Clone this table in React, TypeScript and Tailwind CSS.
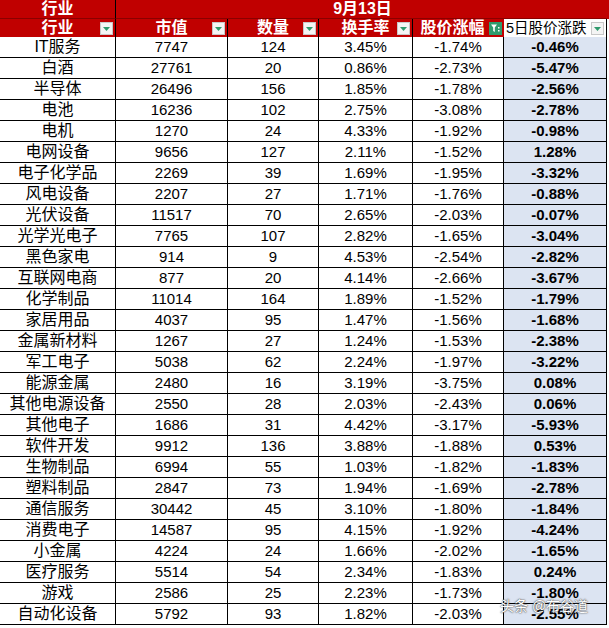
const rows: [string, string, string, string, string, string][] = [
  ['IT服务', '7747', '124', '3.45%', '-1.74%', '-0.46%'],
  ['白酒', '27761', '20', '0.86%', '-2.73%', '-5.47%'],
  ['半导体', '26496', '156', '1.85%', '-1.78%', '-2.56%'],
  ['电池', '16236', '102', '2.75%', '-3.08%', '-2.78%'],
  ['电机', '1270', '24', '4.33%', '-1.92%', '-0.98%'],
  ['电网设备', '9656', '127', '2.11%', '-1.52%', '1.28%'],
  ['电子化学品', '2269', '39', '1.69%', '-1.95%', '-3.32%'],
  ['风电设备', '2207', '27', '1.71%', '-1.76%', '-0.88%'],
  ['光伏设备', '11517', '70', '2.65%', '-2.03%', '-0.07%'],
  ['光学光电子', '7765', '107', '2.82%', '-1.65%', '-3.04%'],
  ['黑色家电', '914', '9', '4.53%', '-2.54%', '-2.82%'],
  ['互联网电商', '877', '20', '4.14%', '-2.66%', '-3.67%'],
  ['化学制品', '11014', '164', '1.89%', '-1.52%', '-1.79%'],
  ['家居用品', '4037', '95', '1.47%', '-1.56%', '-1.68%'],
  ['金属新材料', '1267', '27', '1.24%', '-1.53%', '-2.38%'],
  ['军工电子', '5038', '62', '2.24%', '-1.97%', '-3.22%'],
  ['能源金属', '2480', '16', '3.19%', '-3.75%', '0.08%'],
  ['其他电源设备', '2550', '28', '2.03%', '-2.43%', '0.06%'],
  ['其他电子', '1686', '31', '4.42%', '-3.17%', '-5.93%'],
  ['软件开发', '9912', '136', '3.88%', '-1.88%', '0.53%'],
  ['生物制品', '6994', '55', '1.03%', '-1.82%', '-1.83%'],
  ['塑料制品', '2847', '73', '1.94%', '-1.69%', '-2.78%'],
  ['通信服务', '30442', '45', '3.10%', '-1.80%', '-1.84%'],
  ['消费电子', '14587', '95', '4.15%', '-1.92%', '-4.24%'],
  ['小金属', '4224', '24', '1.66%', '-2.02%', '-1.65%'],
  ['医疗服务', '5514', '54', '2.34%', '-1.83%', '0.24%'],
  ['游戏', '2586', '25', '2.23%', '-1.73%', '-1.80%'],
  ['自动化设备', '5792', '93', '1.82%', '-2.03%', '-2.55%'],
];

const cols = 'grid grid-cols-[116px_112px_91px_94px_91px_103px]';
const font = "[font-family:'Liberation_Sans','Noto_Sans_CJK_SC',sans-serif]";

function DropBtn() {
  return (
    <span className="absolute right-[2px] top-[3px] w-[13px] h-[13px] bg-[#f4f4f4] border border-[#c8c8c8] flex items-center justify-center">
      <svg width="7" height="4" viewBox="0 0 7 4">
        <path d="M0 0 L7 0 L3.5 4 Z" fill="#2f9a6c" />
      </svg>
    </span>
  );
}

function FilterBtn() {
  return (
    <span className="absolute right-[2px] top-[3px] w-[13px] h-[13px] bg-[#2f9a6c] flex items-center justify-center">
      <svg width="9" height="9" viewBox="0 0 9 9">
        <path d="M0 0.5 L6 0.5 L3.8 3.5 L3.8 8 L2.2 7 L2.2 3.5 Z" fill="#fff" />
        <rect x="7" y="3" width="1.5" height="1.5" fill="#fff" />
        <rect x="7" y="6" width="1.5" height="1.5" fill="#fff" />
      </svg>
    </span>
  );
}

export default function App() {
  return (
    <div className={`w-[609px] h-[628px] bg-white overflow-hidden relative ${font}`}>
      <div className={`${cols} h-[19px] bg-[#c00000] text-white font-bold text-[16px] leading-[18px]`}>
        <div className="border-r border-b border-black border-b-[#8a0000] text-center">行业</div>
        <div className="col-span-5 border-b border-[#8a0000] text-center pl-[2px]">9月13日</div>
      </div>
      <div className={`${cols} h-[18px] text-[16px] leading-[18px]`}>
        <div className="relative bg-[#c00000] text-white font-bold text-center border-r border-black">行业<DropBtn /></div>
        <div className="relative bg-[#c00000] text-white font-bold text-center border-r border-black">市值<DropBtn /></div>
        <div className="relative bg-[#c00000] text-white font-bold text-center border-r border-black">数量<DropBtn /></div>
        <div className="relative bg-[#c00000] text-white font-bold text-center border-r border-black">换手率<DropBtn /></div>
        <div className="relative bg-[#c00000] text-white font-bold text-center pr-[12px]">股价涨幅<FilterBtn /></div>
        <div className="relative bg-white text-black text-[14.5px] pl-[2px] border-r border-black whitespace-nowrap">5日股价涨跌<DropBtn /></div>
      </div>
      {rows.map((r) => (
        <div key={r[0]} className={`${cols} h-[21px] text-[15px] leading-[20px] text-black`}>
          <div className="border-r border-b border-black text-center text-[16px]">{r[0]}</div>
          <div className="border-r border-b border-black text-center">{r[1]}</div>
          <div className="border-r border-b border-black text-center">{r[2]}</div>
          <div className="border-r border-b border-black text-center">{r[3]}</div>
          <div className="border-r border-b border-black text-center">{r[4]}</div>
          <div className="border-r border-b border-black text-center bg-[#dce4f2] font-bold">{r[5]}</div>
        </div>
      ))}
      <div className="absolute left-[500px] top-[598px] text-[14px] leading-[16px] whitespace-nowrap text-white [text-shadow:0_0_2px_#555,0_0_1px_#333]">
        头条 @布谷道
      </div>
    </div>
  );
}
